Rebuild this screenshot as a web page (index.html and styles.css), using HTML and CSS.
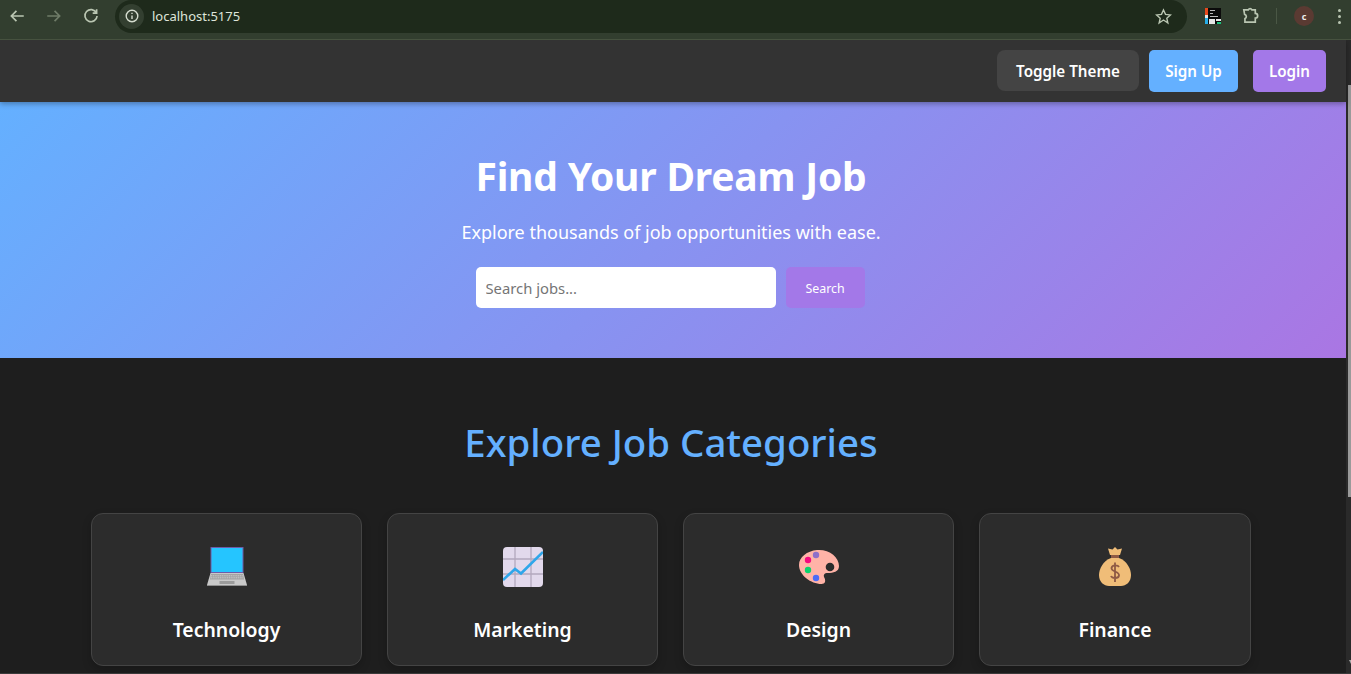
FILE: index.html
```html
<!DOCTYPE html>
<html lang="en">
<head>
    <meta charset="UTF-8">
    <title>Job Portal</title>
    <link rel="stylesheet" href="styles.css">
</head>
<body>
    <!-- Browser toolbar -->
    <div class="browser-bar">
        <div class="browser-nav">
            <svg class="tool-icon" viewBox="0 0 16 16"><path d="M14 8H3M7.500 3.500 3 8l4.500 4.500" /></svg>
            <svg class="tool-icon dim" viewBox="0 0 16 16"><path d="M2 8h11M8.500 3.500 13 8l-4.500 4.500" /></svg>
            <svg class="tool-icon" viewBox="0 0 16 16"><path d="M12.800 5.200A5.400 5.400 0 1 0 13.400 8M13 2v3.500H9.500" /></svg>
        </div>
        <div class="address">
            <span class="site-info">
                <svg viewBox="0 0 16 16"><circle cx="8" cy="8" r="5.800" /><path d="M8 7.400v3.600M8 4.800v1.300" /></svg>
            </span>
            <span class="url">localhost:5175</span>
            <svg class="star" viewBox="0 0 16 16"><path d="m8 1.800 1.900 4.200 4.600.5-3.400 3.100 1 4.500L8 11.300l-4.100 2.800 1-4.500L1.500 6.500l4.600-.5z" /></svg>
        </div>
        <div class="browser-tools">
            <svg class="ext-logo" viewBox="0 0 16 16">
                <rect width="16" height="16" fill="#0b0b0b" />
                <rect width="3" height="7" fill="#e8481c" />
                <rect y="7" width="3" height="3" fill="#e6e6e6" />
                <rect y="10" width="3" height="6" fill="#27aee8" />
                <rect x="4" y="11" width="6" height="5" fill="#e6e6e6" />
                <rect x="11" y="11" width="5" height="2" fill="#e6e6e6" />
                <rect x="12" y="14" width="4" height="2" fill="#19c37d" />
                <rect x="5" y="2" width="5" height="1" fill="#bbb" />
                <rect x="5" y="5" width="3" height="1" fill="#bbb" />
                <rect x="5" y="8" width="8" height="1" fill="#bbb" />
            </svg>
            <svg class="tool-icon puzzle" viewBox="0 0 16 16"><path d="M2.500 2.500h4a1.800 1.800 0 0 1 3.200 0h3v3.200a1.800 1.800 0 0 1 0 4.200v3.600H3.500v-3.200a2 2 0 0 0-.3-3.800z" /></svg>
            <span class="tool-divider"></span>
            <span class="avatar">c</span>
            <span class="kebab"><i></i><i></i><i></i></span>
        </div>
    </div>

    <div class="page">
        <main class="content">
            <!-- Navbar -->
            <nav class="navbar">
                <button class="nav-btn theme-btn">Toggle Theme</button>
                <button class="nav-btn signup-btn">Sign Up</button>
                <button class="nav-btn login-btn">Login</button>
            </nav>

            <!-- Hero -->
            <header class="hero">
                <h1>Find Your Dream Job</h1>
                <p>Explore thousands of job opportunities with ease.</p>
                <form class="search-form">
                    <input type="text" placeholder="Search jobs...">
                    <button type="button">Search</button>
                </form>
            </header>

            <!-- Categories -->
            <section class="categories">
                <h2>Explore Job Categories</h2>
                <div class="category-grid">
                    <div class="category-card">
                        <svg class="category-icon" viewBox="0 0 40 40">
                            <rect x="3.500" y="0" width="33" height="26" fill="#6f5ba8" />
                            <rect x="4.500" y="1" width="31" height="24" fill="#25c5ff" />
                            <path d="M3.500 26h33l3.500 12H0z" fill="#c9c9c9" />
                            <path d="M4 27h32l1 5.500H3z" fill="#a3a3a3" />
                            <path d="M4 28.800h32M3.800 30.800h32.400" stroke="#ddd" stroke-width=".7" stroke-dasharray="1.200 .6" />
                            <rect x="12.500" y="34" width="15" height="3" fill="#9b9b9b" />
                            <rect y="38" width="40" height="1" fill="#8f8f8f" />
                        </svg>
                        <h3>Technology</h3>
                    </div>
                    <div class="category-card">
                        <svg class="category-icon" viewBox="0 0 40 40">
                            <rect width="40" height="40" rx="4" fill="#e2d9ec" />
                            <path d="M12 0v40M28 0v40M0 12h40M0 27h40" stroke="#b3a8bd" stroke-width="1.300" />
                            <path d="M0 33 12 22l6 4.500L40 5" fill="none" stroke="#2ea6ea" stroke-width="2.600" />
                        </svg>
                        <h3>Marketing</h3>
                    </div>
                    <div class="category-card">
                        <svg class="category-icon" viewBox="0 0 40 40">
                            <path d="M18 3c12-1 22 7 22 16 0 6-6 7-11 7-4 0-5 2-3.500 5 1.500 3 .5 6-3 6C12 37 0 28 0 18 0 10 8 4 18 3z" fill="#ffb3a7" />
                            <circle cx="31" cy="20" r="4.300" fill="#2b2b2b" />
                            <circle cx="17" cy="8" r="3.200" fill="#8e6fc9" />
                            <circle cx="9" cy="13" r="3.200" fill="#f4097f" />
                            <circle cx="9" cy="23" r="3.200" fill="#0ad36c" />
                            <circle cx="17" cy="31" r="3.200" fill="#4a6cf7" />
                        </svg>
                        <h3>Design</h3>
                    </div>
                    <div class="category-card">
                        <svg class="category-icon" viewBox="0 0 40 40">
                            <path d="M20 0l2.500 2.500L27 1.500 25 8h-10l-2-6.500 4.500 1z" fill="#f0bd78" />
                            <rect x="16" y="8" width="8" height="3" fill="#8f5a45" />
                            <path d="M16 11h8c8 3 12 11 12 17 0 7-5 11-10 11H14C9 39 4 35 4 28c0-6 4-14 12-17z" fill="#f0bd78" />
                            <path d="M24 20c-1-2-7-2.500-7.500 1-.5 4 8 3 7.500 7.500-.5 3.500-7 3-8 .5M20 15.500V35" fill="none" stroke="#8f5a45" stroke-width="1.800" />
                        </svg>
                        <h3>Finance</h3>
                    </div>
                </div>
            </section>
        </main>

        <!-- Page scrollbar -->
        <div class="scrollbar">
            <div class="scroll-thumb"></div>
            <div class="scroll-arrow"></div>
        </div>
    </div>
</body>
</html>
```

FILE: styles.css
```css
/* General Reset */
* {
    margin: 0;
    padding: 0;
    box-sizing: border-box;
    font-family: "Noto Sans", Arial, sans-serif;
}

html, body {
    height: 100%;
    overflow: hidden;
}

body {
    background-color: #1e1e1e;
}

/* Browser toolbar */
.browser-bar {
    height: 40px;
    display: flex;
    align-items: center;
    background-color: #323e2f;
    border-bottom: 1px solid #46523f;
    padding-bottom: 7px;
}

.browser-nav {
    display: flex;
    gap: 19px;
    margin-left: 8px;
    width: 107px;
}

.tool-icon {
    width: 18px;
    height: 18px;
    fill: none;
    stroke: #bac6b2;
    stroke-width: 1.500;
    flex-shrink: 0;
}

.tool-icon.dim {
    stroke: #6f7c68;
}

.address {
    flex-grow: 1;
    height: 33px;
    display: flex;
    align-items: center;
    background-color: #1e2a1b;
    border-radius: 17px;
    padding: 0 15px 0 4px;
}

.site-info {
    width: 25px;
    height: 25px;
    border-radius: 50%;
    background-color: #333f30;
    display: flex;
    align-items: center;
    justify-content: center;
}

.site-info svg {
    width: 16px;
    height: 16px;
    fill: none;
    stroke: #d5dccf;
    stroke-width: 1.400;
}

.url {
    flex-grow: 1;
    margin-left: 8px;
    color: #dfe5da;
    font-size: 13px;
}

.star {
    width: 17px;
    height: 17px;
    fill: none;
    stroke: #bac6b2;
    stroke-width: 1.300;
}

.browser-tools {
    width: 164px;
    display: flex;
    align-items: center;
    padding-left: 18px;
}

.ext-logo {
    width: 16px;
    height: 16px;
}

.puzzle {
    margin-left: 20px;
}

.tool-divider {
    width: 1px;
    height: 16px;
    background-color: #4a5745;
    margin-left: 17px;
}

.avatar {
    width: 20px;
    height: 20px;
    margin-left: 17px;
    border-radius: 50%;
    background-color: #5a3a32;
    color: #eee;
    font-size: 9px;
    font-weight: 700;
    display: flex;
    align-items: center;
    justify-content: center;
}

.kebab {
    margin-left: 24px;
    display: flex;
    flex-direction: column;
    gap: 3px;
}

.kebab i {
    display: block;
    width: 3px;
    height: 3px;
    border-radius: 50%;
    background-color: #bac6b2;
}

/* Page */
.page {
    height: 634px;
    display: flex;
    overflow: hidden;
    border-bottom: 1px solid #3a3a3a;
}

.content {
    width: 1346px;
    flex-shrink: 0;
}

/* Scrollbar */
.scrollbar {
    flex-grow: 1;
    display: flex;
    flex-direction: column;
    align-items: flex-end;
    background-color: #2a2a2a;
}

.scroll-thumb {
    width: 3px;
    height: 412px;
    margin-top: 45px;
    background-color: #9a9a9a;
}

.scroll-arrow {
    margin-top: auto;
    margin-bottom: 9px;
    border-left: 2px solid transparent;
    border-top: 4px solid #a8a8a8;
}

/* Navbar */
.navbar {
    height: 62px;
    display: flex;
    justify-content: flex-end;
    align-items: center;
    gap: 10px;
    padding-right: 20px;
    background-color: #333333;
    box-shadow: 0 2px 5px rgba(0, 0, 0, 0.3);
    position: relative;
}

.nav-btn {
    height: 42px;
    padding: 0 16px;
    border: none;
    border-radius: 5px;
    color: #ffffff;
    font-size: 15.2px;
    font-weight: 600;
}

.theme-btn {
    height: 41px;
    width: 142px;
    padding: 0;
    margin-top: -1px;
    background-color: #444444;
    border-radius: 8px;
}

.signup-btn {
    width: 89px;
    padding: 0;
    background-color: #64b0ff;
}

.login-btn {
    width: 73px;
    padding: 0;
    margin-left: 5px;
    background-color: #a378e8;
}

/* Hero */
.hero {
    height: 256px;
    display: flex;
    flex-direction: column;
    align-items: center;
    padding: 46px 4px 0 0;
    background: linear-gradient(135deg, #64b0ff, #aa76e3);
    color: #ffffff;
}

.hero h1 {
    font-size: 39px;
    font-weight: 700;
    letter-spacing: -0.2px;
    line-height: 56px;
}

.hero p {
    margin-top: 16px;
    font-size: 18px;
    line-height: 24px;
}

.search-form {
    display: flex;
    gap: 10px;
    margin-top: 23px;
    margin-right: 2px;
}

.search-form input {
    width: 300px;
    height: 41px;
    padding: 0 10px;
    border: none;
    border-radius: 5px;
    font-size: 14.8px;
    background-color: #ffffff;
}

.search-form button {
    width: 79px;
    height: 41px;
    padding-top: 1px;
    border: none;
    border-radius: 5px;
    background-color: #a378e8;
    color: #ffffff;
    font-size: 12.4px;
}

/* Categories */
.categories {
    padding: 57px 0 0 91px;
    text-align: center;
}

.categories h2 {
    font-size: 38.4px;
    font-weight: 500;
    line-height: 54px;
    padding-right: 95px;
    color: #64b0ff;
}

.category-grid {
    display: grid;
    grid-template-columns: repeat(3, 271px) 272px;
    gap: 25px;
    margin-top: 43.5px;
}

.category-card {
    height: 153.5px;
    padding-top: 33.5px;
    background-color: #2c2c2c;
    border: 1px solid #444444;
    border-radius: 12px;
    box-shadow: 0 4px 10px rgba(0, 0, 0, 0.2);
}

.category-icon {
    display: block;
    width: 40px;
    height: 40px;
    margin: 0 auto;
}

.category-card h3 {
    margin-top: 28px;
    color: #ffffff;
    font-size: 19.4px;
    font-weight: 600;
    line-height: 30px;
}
```
